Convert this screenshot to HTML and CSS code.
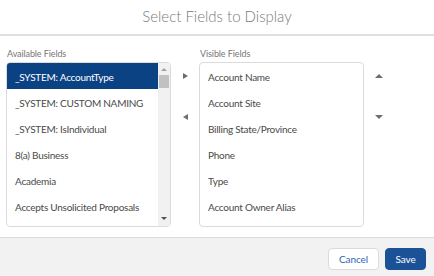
FILE: index.html
```html
<!DOCTYPE html>
<html>
<head>
<meta charset="utf-8">
<link rel="stylesheet" href="styles.css">
</head>
<body>
<div class="modal">
  <header class="modal-header">
    <h2 class="title">Select Fields to Display</h2>
  </header>
  <main class="modal-body">
    <div class="column">
      <div class="label">Available Fields</div>
      <div class="listbox listbox-available">
        <ul class="options">
          <li class="option selected">_SYSTEM: AccountType</li>
          <li class="option">_SYSTEM: CUSTOM NAMING</li>
          <li class="option">_SYSTEM: IsIndividual</li>
          <li class="option">8(a) Business</li>
          <li class="option">Academia</li>
          <li class="option">Accepts Unsolicited Proposals</li>
        </ul>
        <div class="scrollbar">
          <span class="sb-arrow sb-up"></span>
          <span class="sb-thumb"></span>
          <span class="sb-spacer"></span>
          <span class="sb-arrow sb-down"></span>
        </div>
      </div>
    </div>
    <div class="mover">
      <button class="icon-btn" aria-label="Move to Visible"><span class="tri tri-right"></span></button>
      <button class="icon-btn" aria-label="Move to Available"><span class="tri tri-left"></span></button>
    </div>
    <div class="column">
      <div class="label label-right">Visible Fields</div>
      <div class="listbox">
        <ul class="options">
          <li class="option">Account Name</li>
          <li class="option">Account Site</li>
          <li class="option">Billing State/Province</li>
          <li class="option">Phone</li>
          <li class="option">Type</li>
          <li class="option">Account Owner Alias</li>
        </ul>
      </div>
    </div>
    <div class="mover mover-order">
      <button class="icon-btn" aria-label="Move Up"><span class="tri tri-up"></span></button>
      <button class="icon-btn" aria-label="Move Down"><span class="tri tri-down"></span></button>
    </div>
  </main>
  <footer class="modal-footer">
    <button class="btn btn-neutral">Cancel</button>
    <button class="btn btn-brand">Save</button>
  </footer>
</div>
</body>
</html>
```
FILE: styles.css
```css
* { box-sizing: border-box; }
html, body { margin: 0; padding: 0; }
body {
  width: 434px;
  height: 276px;
  background: #fff;
  font-family: Lato, "Open Sans", Arial, sans-serif;
  color: #3e3e3c;
  overflow: hidden;
}
.modal {
  display: flex;
  flex-direction: column;
  height: 276px;
}
.modal-header {
  height: 36px;
  border-bottom: 2px solid #e0e0e0;
  display: flex;
  align-items: center;
  justify-content: center;
}
.title {
  margin: 0;
  font-size: 15px;
  font-weight: 300;
  color: #7a7a7a;
  line-height: 20px;
  padding-bottom: 2px;
}
.modal-body {
  flex: 1;
  display: flex;
  padding: 11px 0 0 6px;
}
.column {
  width: 165px;
  display: flex;
  flex-direction: column;
}
.label {
  font-size: 9px;
  line-height: 13px;
  color: #777;
  margin: 0 0 2px 1px;
  letter-spacing: -0.1px;
}
.listbox {
  height: 165px;
  border: 1px solid #dddbda;
  border-radius: 4px;
  display: flex;
  overflow: hidden;
  background: #fff;
}
.options {
  list-style: none;
  margin: 0;
  padding: 0;
  flex: 1;
}
.option {
  height: 26px;
  line-height: 29px;
  padding-left: 8px;
  font-size: 10px;
  letter-spacing: -0.25px;
  color: #4a4a48;
  white-space: nowrap;
}
.option.selected {
  background: #0b4284;
  color: #fff;
}
.scrollbar {
  width: 12px;
  background: #f1f1f1;
  display: flex;
  flex-direction: column;
  align-items: center;
}
.sb-arrow {
  width: 0;
  height: 0;
  border-left: 3px solid transparent;
  border-right: 3px solid transparent;
}
.sb-up {
  margin-top: 5px;
  border-bottom: 3px solid #a3a3a3;
}
.sb-down {
  margin-bottom: 6px;
  border-top: 3px solid #505050;
}
.sb-thumb {
  margin-top: 4px;
  width: 10px;
  height: 13px;
  background: #c1c1c1;
}
.sb-spacer { flex: 1; }
.mover {
  width: 28px;
  display: flex;
  flex-direction: column;
  align-items: center;
  padding-top: 22px;
  gap: 27px;
}
.mover-order { width: 30px; }
.icon-btn {
  width: 14px;
  height: 14px;
  padding: 0;
  border: 0;
  background: transparent;
  display: flex;
  align-items: center;
  justify-content: center;
}
.tri { width: 0; height: 0; display: block; }
.tri-right {
  border-top: 3.5px solid transparent;
  border-bottom: 3.5px solid transparent;
  border-left: 5px solid #706e6b;
}
.tri-left {
  border-top: 3.5px solid transparent;
  border-bottom: 3.5px solid transparent;
  border-right: 5px solid #706e6b;
}
.tri-up {
  border-left: 4px solid transparent;
  border-right: 4px solid transparent;
  border-bottom: 4px solid #706e6b;
}
.tri-down {
  border-left: 4px solid transparent;
  border-right: 4px solid transparent;
  border-top: 4px solid #706e6b;
}
.modal-footer {
  height: 39px;
  border-top: 1px solid #dddbda;
  background: #f3f2f2;
  display: flex;
  justify-content: flex-end;
  align-items: flex-start;
  gap: 6px;
  padding: 10px 8px 0 0;
}
.btn {
  height: 22px;
  border-radius: 4px;
  font-family: Lato, "Open Sans", Arial, sans-serif;
  font-size: 10px;
  line-height: 20px;
  padding: 0;
  border: 1px solid #dddbda;
  letter-spacing: -0.1px;
}
.btn-neutral {
  width: 51px;
  background: #fff;
  color: #2b68b5;
}
.btn-brand {
  width: 41px;
  background: #1b5297;
  border-color: #1b5297;
  color: #fff;
}
```
